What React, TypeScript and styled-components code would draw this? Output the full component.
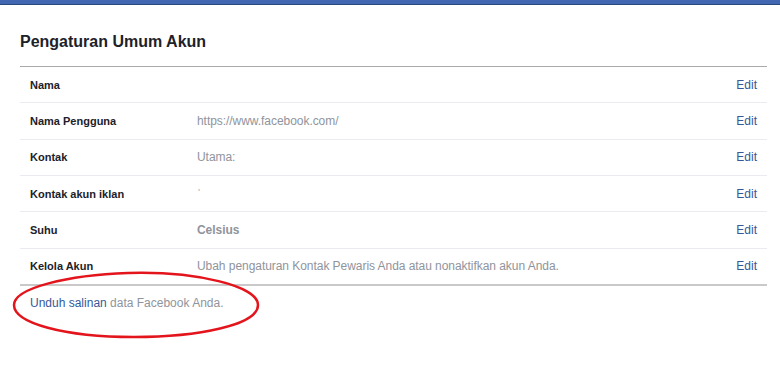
import React from 'react';
import styled, { createGlobalStyle } from 'styled-components';

type SettingRow = {
  label: string;
  value?: string;
  strongValue?: boolean;
};

const rows: SettingRow[] = [
  { label: 'Nama' },
  { label: 'Nama Pengguna', value: 'https://www.facebook.com/' },
  { label: 'Kontak', value: 'Utama:' },
  { label: 'Kontak akun iklan', value: '\u02c8' },
  { label: 'Suhu', value: 'Celsius', strongValue: true },
  {
    label: 'Kelola Akun',
    value: 'Ubah pengaturan Kontak Pewaris Anda atau nonaktifkan akun Anda.',
  },
];

const App = (): JSX.Element => (
  <>
    <GlobalStyle />
    <StyledTopBar />
    <StyledPage>
      <StyledTitle>Pengaturan Umum Akun</StyledTitle>
      <StyledTable>
        {rows.map((row) => (
          <StyledRow key={row.label}>
            <StyledLabel>{row.label}</StyledLabel>
            <StyledValue $strong={row.strongValue}>{row.value}</StyledValue>
            <StyledEdit href="#">Edit</StyledEdit>
          </StyledRow>
        ))}
      </StyledTable>
      <StyledFooter>
        <StyledFooterLink href="#">Unduh salinan</StyledFooterLink> data
        Facebook Anda.
        <StyledCircle viewBox="0 0 252 70">
          <path
            d="M4 34 C4 17 58 4 118 2 C186 0 248 15 248 34 C248 54 188 66 124 66 C54 66 4 52 4 34 Z"
            fill="none"
            stroke="#e3141c"
            strokeWidth="2.5"
          />
        </StyledCircle>
      </StyledFooter>
    </StyledPage>
  </>
);

const GlobalStyle = createGlobalStyle`
  html, body, #root {
    min-height: 390px;
  }

  body {
    margin: 0;
    background: #ffffff;
    font-family: "Liberation Sans", Arial, sans-serif;
  }
`;

const StyledTopBar = styled.div`
  background: #4267b2;
  border-bottom: 1px solid #29487d;
  height: 4px;
`;

const StyledPage = styled.div`
  padding: 0 13px 60px 20px;
`;

const StyledTitle = styled.h1`
  color: #1d2129;
  font-size: 16px;
  font-weight: bold;
  line-height: 20px;
  margin: 0;
  padding: 27px 0 14px;
`;

const StyledTable = styled.div`
  border-top: 1px solid #aaaaaa;
  border-bottom: 2px solid #c9c9c9;
  display: flex;
  flex-direction: column;
`;

const StyledRow = styled.div`
  align-items: center;
  display: grid;
  grid-template-columns: 167px 1fr auto;
  height: 35.33px;
  padding: 0 10px;

  & + & {
    border-top: 1px solid #e9ebee;
  }
`;

const StyledLabel = styled.div`
  color: #1d2129;
  font-size: 11px;
  font-weight: bold;
`;

const StyledValue = styled.div<{ $strong?: boolean }>`
  color: #90949c;
  font-size: 12px;
  font-weight: ${({ $strong }) => ($strong ? 'bold' : 'normal')};
  letter-spacing: -0.05px;
`;

const StyledEdit = styled.a`
  color: #365899;
  font-size: 12px;
  text-decoration: none;
`;

const StyledFooter = styled.div`
  color: #90949c;
  font-size: 12px;
  padding: 10px 10px;
  position: relative;
`;

const StyledFooterLink = styled.a`
  color: #365899;
  text-decoration: none;
`;

const StyledCircle = styled.svg`
  height: 70px;
  left: -10px;
  pointer-events: none;
  position: absolute;
  top: -15px;
  width: 252px;
`;

export default App;
